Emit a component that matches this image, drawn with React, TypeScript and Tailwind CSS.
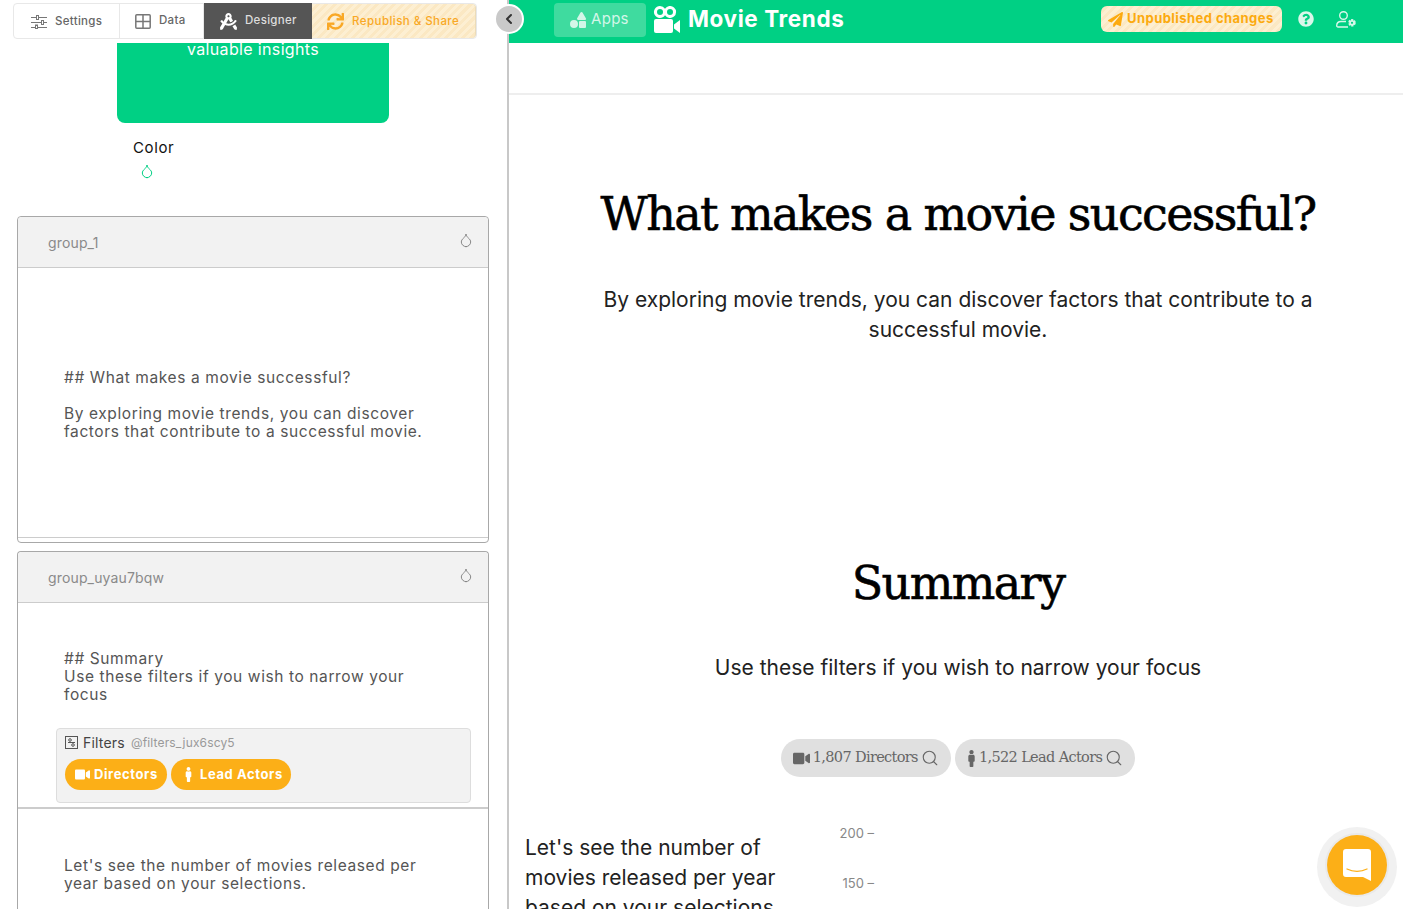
import React from 'react';
import { Droplet, Search, ChevronLeft } from 'lucide-react';
import { FaDraftingCompass, FaMale, FaPaperPlane, FaQuestionCircle, FaShapes, FaSync, FaVideo } from 'react-icons/fa';

const sans = '[font-family:Inter,sans-serif]';
const serif = '[font-family:DejaVu_Serif,serif]';
const stripes = 'bg-[repeating-linear-gradient(135deg,#fdefd2,#fdefd2_3px,#fbe8c3_3px,#fbe8c3_6px)]';
const editorText = 'text-[15.500px] leading-[18px] tracking-[0.6px] text-[#555]';
const heading = 'text-center text-black text-[46px] leading-[60px] tracking-[-1.600px] [-webkit-text-stroke:0.6px_#000]';

const MovieCamera = () => (
  <svg width="28" height="27" viewBox="0 0 28 27" fill="white">
    <path fillRule="evenodd" d="M7 0a6 6 0 0 1 5 2.800A6 6 0 1 1 12 9.200 6 6 0 1 1 7 0zm0 3a3 3 0 1 0 0 6 3 3 0 0 0 0-6zm10 0a3 3 0 1 0 0 6 3 3 0 0 0 0-6z" />
    <rect x="1" y="13" width="19" height="14" rx="2" />
    <path d="M21 18.500 27 14v13l-6-4.500z" />
  </svg>
);

const UserGear = () => (
  <svg width="21" height="17" viewBox="0 0 21 17" fill="none" stroke="#d9f7ea" strokeWidth="1.400">
    <circle cx="7.500" cy="4.500" r="3.800" />
    <path d="M12 16H2a1.300 1.300 0 0 1-1.300-1.300c0-2.700 2-4.200 4.300-4.200h5" />
    <circle cx="16" cy="11.800" r="2.800" fill="#d9f7ea" stroke="#d9f7ea" strokeWidth="2" strokeDasharray="2 1" />
    <circle cx="16" cy="11.800" r="1.100" fill="#00d084" stroke="none" />
  </svg>
);

const SlidersIcon = () => (
  <svg width="16" height="14" viewBox="0 0 16 14" fill="white" stroke="#777" strokeWidth="1">
    <path d="M0 2.500h16M0 7.500h16M0 12.500h16" />
    <rect x="5.500" y="0.500" width="2" height="4" />
    <rect x="10.500" y="5.500" width="2" height="4" />
    <rect x="4.500" y="10" width="2" height="3.500" />
  </svg>
);

const DataIcon = () => (
  <svg width="16" height="15" viewBox="0 0 16 15" fill="none" stroke="#777" strokeWidth="1.500">
    <rect x="0.800" y="0.800" width="14.400" height="13.400" rx="1" />
    <path d="M8 1v13M1 7.500h14" />
  </svg>
);

const FiltersIcon = () => (
  <svg width="13" height="13" viewBox="0 0 13 13" fill="none" stroke="#555" strokeWidth="1">
    <rect x="0.500" y="0.500" width="12" height="12" />
    <circle cx="5" cy="4" r="1.300" />
    <circle cx="8" cy="9" r="1.300" />
    <path d="M3 6.500h7" />
  </svg>
);

const Intercom = () => (
  <svg width="28" height="32" viewBox="0 0 28 32" fill="white">
    <path d="M3 0h22a3 3 0 0 1 3 3v29l-8-4H3a3 3 0 0 1-3-3V3a3 3 0 0 1 3-3z" />
    <path d="M4 20c6 3 14 3 20 0" fill="none" stroke="#fcaf17" strokeWidth="1.300" strokeLinecap="round" />
  </svg>
);

const GroupHeader = ({ name }: { name: string }) => (
  <div className="h-[51px] shrink-0 flex justify-between items-center pl-[30px] pr-[14px] bg-[#f2f2f2] border-b border-[#ccc] rounded-t-[4px]">
    <span className="text-[14px] text-[#8a8a8a] tracking-[0.15px]">{name}</span>
    <Droplet size={16} strokeWidth={1.500} className="text-[#888] mb-[5px]" />
  </div>
);

const Tabs = () => (
  <div className="h-[43px] shrink-0 pt-[3px] pl-[13px] pr-[30px] bg-white">
    <div className="h-[36px] flex text-[11.500px] font-medium tracking-[0.3px] rounded-[4px] border border-[#e8e8e8]">
      <div className="w-[106px] flex items-center gap-2 pl-[17px] pt-[1px] border-r border-[#e8e8e8] text-[#666]">
        <SlidersIcon />
        Settings
      </div>
      <div className="w-[84px] flex items-center gap-2 pl-[15px] text-[#666] border-r border-[#e8e8e8]">
        <DataIcon />
        Data
      </div>
      <div className="w-[108px] flex items-center gap-2 pl-[16px] bg-[#555] text-[#ddd] -my-[1px]">
        <FaDraftingCompass size={17} className="text-white" />
        Designer
      </div>
      <div className={`flex-1 flex items-center gap-[8px] pl-[15px] pt-[1px] text-[#f9a825] tracking-[0.45px] ${stripes} rounded-r-[4px] border-r border-[#ecdcb8]`}>
        <FaSync size={17} />
        Republish &amp; Share
      </div>
    </div>
  </div>
);

const Sidebar = () => (
  <aside className={`w-[509px] shrink-0 h-full flex flex-col overflow-hidden border-r-[2px] border-[#c8c8c8] ${sans}`}>
    <Tabs />
    <div className="ml-[117px] w-[272px] h-[80px] shrink-0 bg-[#00d084] rounded-b-[8px] text-white text-[16px] tracking-[0.35px] text-center leading-[12px]">
      valuable insights
    </div>
    <div className="ml-[133px] mt-[16px] text-[15px] tracking-[0.6px] leading-[18px] text-[#111]">Color</div>
    <Droplet size={16} strokeWidth={1.500} className="ml-[139px] mt-[6px] shrink-0 text-[#00d084]" />

    <section className="mt-[37px] ml-[17px] w-[472px] h-[327px] shrink-0 flex flex-col border border-[#a8a8a8] rounded-[4px]">
      <GroupHeader name="group_1" />
      <div className={`flex-1 pl-[46px] pr-[50px] pt-[101px] border-b border-[#ccc] ${editorText}`}>
        <p>## What makes a movie successful?</p>
        <p className="mt-[18px]">By exploring movie trends, you can discover factors that contribute to a successful movie.</p>
      </div>
      <div className="h-[4px] shrink-0" />
    </section>

    <section className="mt-[8px] ml-[17px] w-[472px] flex-1 flex flex-col border border-[#a8a8a8] border-b-0 rounded-t-[4px]">
      <GroupHeader name="group_uyau7bqw" />
      <div className={`pl-[46px] pr-[50px] pt-[47px] h-[125px] ${editorText}`}>
        <p>## Summary</p>
        <p>Use these filters if you wish to narrow your focus</p>
      </div>
      <div className="ml-[38px] w-[415px] h-[75px] bg-[#f2f2f2] border border-[#ddd] rounded-[4px] pl-[8px] pt-[4px]">
        <div className="flex items-center gap-[5px] h-[18px]">
          <FiltersIcon />
          <span className="text-[14px] tracking-[0.2px] text-[#444]">Filters</span>
          <span className="text-[12px] tracking-[0.15px] text-[#999] ml-[1px] mt-[1px]">@filters_jux6scy5</span>
        </div>
        <div className="flex gap-[4px] mt-[8px] text-white text-[13px] font-bold tracking-[0.6px]">
          <div className="h-[31px] w-[102px] rounded-full bg-[#fcaf17] flex items-center gap-[4px] pl-[10px]">
            <FaVideo size={15} />
            Directors
          </div>
          <div className="h-[31px] w-[120px] rounded-full bg-[#fcaf17] flex items-center gap-[4px] pl-[10px]">
            <FaMale size={15} />
            Lead Actors
          </div>
        </div>
      </div>
      <div className={`mt-[4px] border-t-[2px] border-[#ccc] pl-[46px] pr-[50px] pt-[48px] ${editorText}`}>
        Let's see the number of movies released per year based on your selections.
      </div>
    </section>
  </aside>
);

const FilterPill = ({ icon, label }: { icon: React.ReactNode; label: string }) => (
  <div className={`h-[38px] rounded-full bg-[#e0e0e0] flex items-center gap-[3px] px-[12px] text-[#666] text-[14.500px] tracking-[-0.65px] ${serif}`}>
    {icon}
    {label}
    <Search size={18} strokeWidth={1.500} />
  </div>
);

const Main = () => (
  <main className={`flex-1 min-w-0 h-full flex flex-col overflow-hidden ${sans}`}>
    <header className="h-[43px] shrink-0 bg-[#00d084] flex items-center pl-[45px] pr-[46px] text-white">
      <div className="w-[92px] h-[34px] rounded-[4px] bg-[#3fdb9f] flex items-center gap-[5px] pl-[16px] mt-[-4px] text-[15px] tracking-[0.3px] text-[#d3f6e8]">
        <FaShapes size={16} />
        Apps
      </div>
      <div className="ml-[7px] mt-[-5px] flex items-center gap-[7px]">
        <MovieCamera />
        <span className="text-[22.500px] font-bold tracking-[0.6px]">Movie Trends</span>
      </div>
      <div className="ml-auto flex items-center">
        <div className={`w-[181px] h-[26px] mt-[-5px] rounded-[6px] ${stripes} flex items-center gap-[4px] pl-[7px] text-[#fcaa0f] text-[13px] font-bold tracking-[0.45px]`}>
          <FaPaperPlane size={15} />
          Unpublished changes
        </div>
        <FaQuestionCircle size={16} className="ml-[16px] mt-[-5px] text-[#d9f7ea]" />
        <div className="ml-[22px] mt-[-4px]"><UserGear /></div>
      </div>
    </header>
    <div className="h-[52px] shrink-0 border-b-2 border-[#eee]" />

    <div className="pl-[4px] flex flex-col">
      <div className={`mt-[89px] ${heading} ${serif}`}>
        What makes a movie successful?
      </div>
      <p className="mt-[41px] mx-auto w-[740px] text-center text-[21px] leading-[30px] text-[#222]">
        By exploring movie trends, you can discover factors that contribute to a successful movie.
      </p>
      <div className={`mt-[208px] ${heading} ${serif}`}>
        Summary
      </div>
      <p className="mt-[40px] text-center text-[21px] leading-[30px] text-[#222]">
        Use these filters if you wish to narrow your focus
      </p>
      <div className="mt-[56px] flex justify-center gap-[4px]">
        <FilterPill icon={<FaVideo size={17} />} label="1,807 Directors" />
        <FilterPill icon={<FaMale size={17} className="w-[7px] mx-[1px]" />} label="1,522 Lead Actors" />
      </div>
      <div className="mt-[41px] flex">
        <p className="ml-[12px] w-[290px] mt-[15px] text-[21px] leading-[30px] text-[#222]">
          Let's see the number of movies released per year based on your selections
        </p>
        <div className="ml-[24px] text-right text-[13px] text-[#888] w-[35px] shrink-0">
          <div className="h-[50px] leading-[30px] whitespace-nowrap">200 –</div>
          <div className="leading-[30px] whitespace-nowrap">150 –</div>
        </div>
      </div>
    </div>
  </main>
);

export default function App() {
  return (
    <div className="h-screen w-full flex overflow-hidden bg-white relative">
      <Sidebar />
      <Main />
      <div className="absolute left-[494px] top-[4px] w-[30px] h-[30px] rounded-full bg-[#c9c9c9] border-2 border-white flex items-center justify-center text-[#333]">
        <ChevronLeft size={16} strokeWidth={3} />
      </div>
      <div className="absolute left-[1317px] top-[827px] w-[80px] h-[80px] rounded-full bg-[#f1f1f1] flex items-center justify-center">
        <div className="w-[60px] h-[60px] mb-[4px] rounded-full bg-[#fcaf17] flex items-center justify-center shadow-[0_0_0_2px_#e9e9e9]">
          <Intercom />
        </div>
      </div>
    </div>
  );
}
